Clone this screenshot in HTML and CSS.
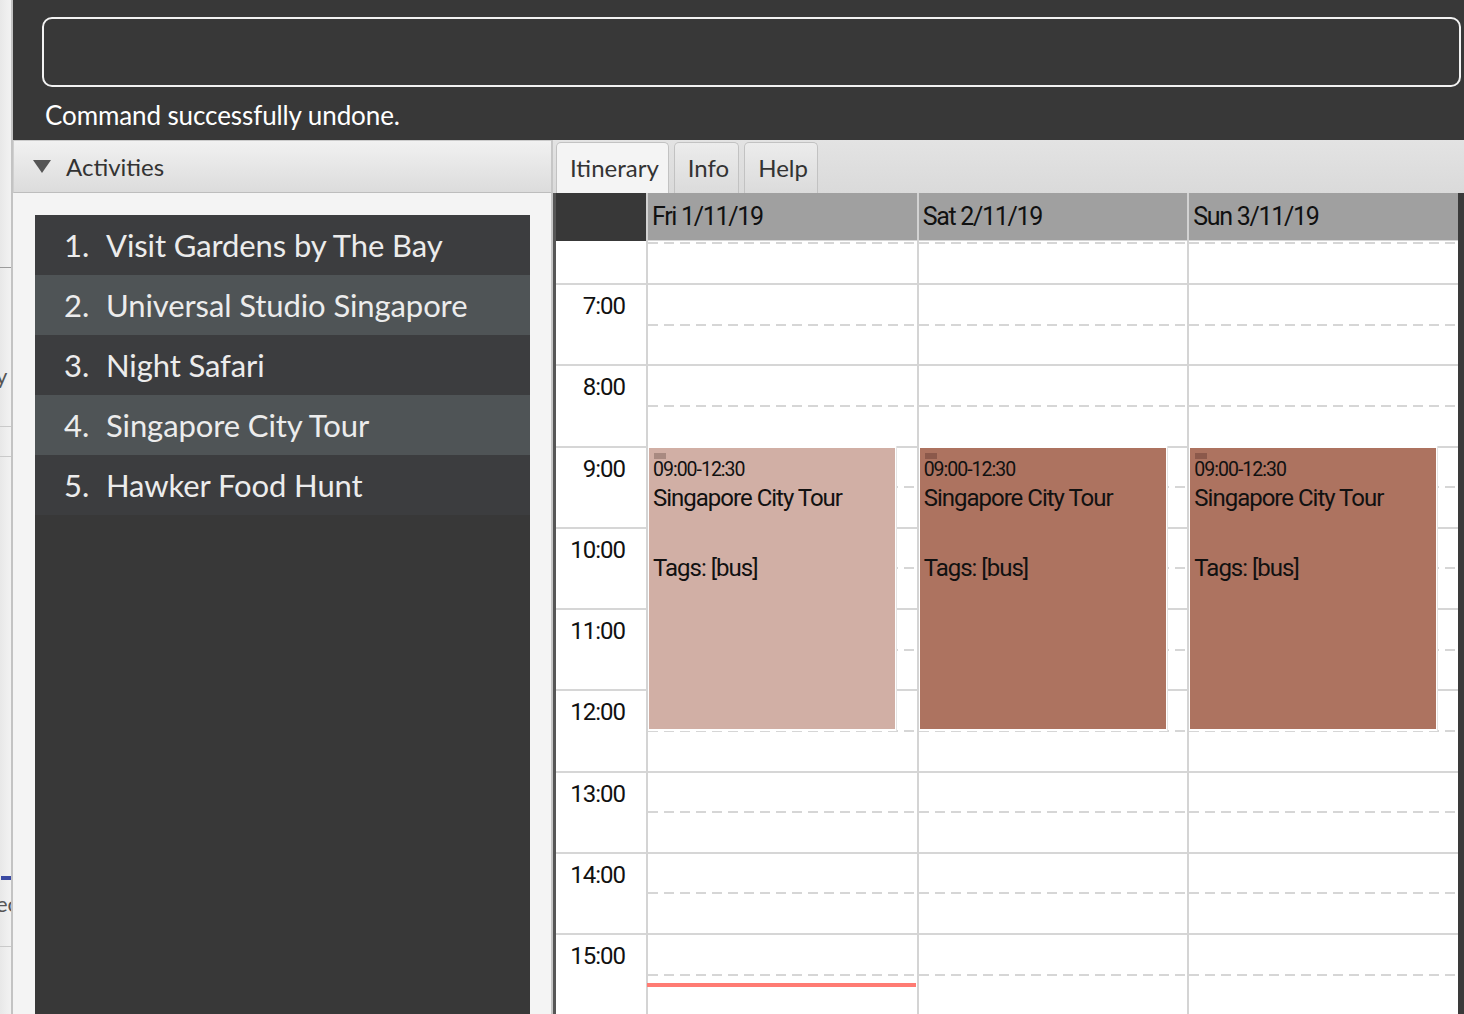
FILE: index.html
```html
<!DOCTYPE html>
<html>
<head>
<meta charset="utf-8">
<link rel="stylesheet" href="styles.css">
</head>
<body>
<div class="screen">
  <div class="bgwin">
    <div class="bw-gap g1"></div>
    <div class="bw-line dark"></div>
    <div class="bw-gap g2"></div>
    <div class="bw-text">y</div>
    <div class="bw-gap g3"></div>
    <div class="bw-line"></div>
    <div class="bw-gap g4"></div>
    <div class="bw-line"></div>
    <div class="bw-gap g5"></div>
    <div class="bw-blue"></div>
    <div class="bw-gap g6"></div>
    <div class="bw-text">ec</div>
    <div class="bw-gap g7"></div>
    <div class="bw-line"></div>
  </div>
  <div class="app">
    <div class="cmdbar">
      <div class="cmdbox"></div>
      <div class="result">Command successfully undone.</div>
    </div>
    <div class="main">
      <div class="left">
        <div class="pane-title"><span class="tri"></span><span>Activities</span></div>
        <div class="listwrap">
          <ul class="list">
            <li class="a"><span class="num">1.</span>Visit Gardens by The Bay</li>
            <li class="b"><span class="num">2.</span>Universal Studio Singapore</li>
            <li class="a"><span class="num">3.</span>Night Safari</li>
            <li class="b"><span class="num">4.</span>Singapore City Tour</li>
            <li class="a"><span class="num">5.</span>Hawker Food Hunt</li>
          </ul>
        </div>
      </div>
      <div class="divider"></div>
      <div class="right">
        <div class="tabs">
          <div class="tab sel">Itinerary</div>
          <div class="tab">Info</div>
          <div class="tab">Help</div>
        </div>
        <div class="cal">
          <div class="cal-head">
            <div class="corner"></div>
            <div class="dayh">Fri 1/11/19</div>
            <div class="dayh">Sat 2/11/19</div>
            <div class="dayh">Sun 3/11/19</div>
            <div class="edge"></div>
          </div>
          <div class="cal-body">
            <div class="timecol">
              <div class="trow first"></div>
              <div class="trow">7:00</div>
              <div class="trow">8:00</div>
              <div class="trow">9:00</div>
              <div class="trow">10:00</div>
              <div class="trow">11:00</div>
              <div class="trow">12:00</div>
              <div class="trow">13:00</div>
              <div class="trow">14:00</div>
              <div class="trow">15:00</div>
            </div>
            <div class="daycol">
              <div class="slot first"></div>
              <div class="slot"></div><div class="slot half"></div>
              <div class="slot"></div><div class="slot half"></div>
              <div class="slot"></div><div class="slot half"></div>
              <div class="slot"></div><div class="slot half"></div>
              <div class="slot"></div><div class="slot half"></div>
              <div class="slot"></div><div class="slot half"></div>
              <div class="slot"></div><div class="slot half"></div>
              <div class="slot"></div><div class="slot half"></div>
              <div class="slot"></div><div class="slot half"></div>
              <div class="ev">
                <div class="evbox light">
                  <div class="mark"></div>
                  <div class="time">09:00-12:30</div>
                  <div class="title">Singapore City Tour</div>
                  <div class="tags">Tags: [bus]</div>
                </div>
              </div>
              <div class="now"></div>
            </div>
            <div class="daycol">
              <div class="slot first"></div>
              <div class="slot"></div><div class="slot half"></div>
              <div class="slot"></div><div class="slot half"></div>
              <div class="slot"></div><div class="slot half"></div>
              <div class="slot"></div><div class="slot half"></div>
              <div class="slot"></div><div class="slot half"></div>
              <div class="slot"></div><div class="slot half"></div>
              <div class="slot"></div><div class="slot half"></div>
              <div class="slot"></div><div class="slot half"></div>
              <div class="slot"></div><div class="slot half"></div>
              <div class="ev">
                <div class="evbox">
                  <div class="mark"></div>
                  <div class="time">09:00-12:30</div>
                  <div class="title">Singapore City Tour</div>
                  <div class="tags">Tags: [bus]</div>
                </div>
              </div>
            </div>
            <div class="daycol">
              <div class="slot first"></div>
              <div class="slot"></div><div class="slot half"></div>
              <div class="slot"></div><div class="slot half"></div>
              <div class="slot"></div><div class="slot half"></div>
              <div class="slot"></div><div class="slot half"></div>
              <div class="slot"></div><div class="slot half"></div>
              <div class="slot"></div><div class="slot half"></div>
              <div class="slot"></div><div class="slot half"></div>
              <div class="slot"></div><div class="slot half"></div>
              <div class="slot"></div><div class="slot half"></div>
              <div class="ev">
                <div class="evbox">
                  <div class="mark"></div>
                  <div class="time">09:00-12:30</div>
                  <div class="title">Singapore City Tour</div>
                  <div class="tags">Tags: [bus]</div>
                </div>
              </div>
            </div>
            <div class="edge"></div>
          </div>
        </div>
      </div>
    </div>
  </div>
</div>
</body>
</html>
```
FILE: styles.css
```css
* { box-sizing: border-box; margin: 0; padding: 0; }
html, body { width: 1464px; height: 1014px; overflow: hidden; }
body { background: #ececec; font-family: Lato, "Open Sans", sans-serif; }

.screen { display: flex; height: 1014px; }

/* fragment of a window behind */
.bgwin {
  width: 13px; flex: none; overflow: hidden;
  background: linear-gradient(to right, #e8e8e8, #f0f0f0 8px, #f2f2f2 11px);
  border-right: 2px solid #c3c3c3;
  display: flex; flex-direction: column;
}
.bw-gap { flex: none; }
.g1 { height: 267px; }
.g2 { height: 96px; }
.g3 { height: 38px; }
.g4 { height: 29px; }
.g5 { height: 419px; }
.g6 { height: 12px; }
.g7 { height: 30px; }
.bw-line { height: 1px; background: #cacaca; flex: none; }
.bw-line.dark { background: #9c9c9c; }
.bw-text { height: 24px; line-height: 24px; font-size: 22px; color: #555; margin-left: -4px; white-space: nowrap; flex: none; }
.bw-blue { height: 4px; margin-left: 1px; background: #3b4aa2; flex: none; }

.app { flex: 1; display: flex; flex-direction: column; min-width: 0; }

.cmdbar { height: 140px; flex: none; background: #383838; padding: 17px 3px 0 29px; }
.cmdbox { height: 70px; border: 2px solid #f2f2f2; border-radius: 10px; }
.result { margin-top: 12px; padding-left: 3px; color: #ffffff; font-size: 26px; line-height: 32px; white-space: nowrap; letter-spacing: -0.1px; }

.main { flex: 1; display: flex; min-height: 0; }

.left { width: 538px; flex: none; background: #f4f4f4; display: flex; flex-direction: column; }
.pane-title {
  height: 53px; flex: none; display: flex; align-items: center; padding-left: 19px;
  border-top: 1px solid #cbcbcb; border-bottom: 1px solid #bdbdbd; border-left: 1px solid #d0d0d0;
  background: linear-gradient(#f1f1f1, #dcdcdc);
  font-size: 24px; color: #333;
}
.tri { width: 0; height: 0; border-left: 9px solid transparent; border-right: 9px solid transparent; border-top: 13px solid #555; margin-right: 15px; }

.listwrap { flex: 1; padding: 22px 21px 0 22px; display: flex; flex-direction: column; min-height: 0; }
.list { list-style: none; flex: 1; background: #383838; }
.list li { height: 60px; line-height: 60px; padding-left: 29px; font-size: 31px; letter-spacing: -0.1px; color: #ececec; white-space: nowrap; }
.list .num { display: inline-block; width: 42px; }
.list li.a { background: #3c3d3f; }
.list li.b { background: #4f5456; }

.divider { width: 2px; flex: none; background: #c6c6c6; }

.right { flex: 1; display: flex; flex-direction: column; min-width: 0; }
.tabs { height: 53px; flex: none; display: flex; align-items: flex-end; gap: 5px; padding-left: 3px; background: linear-gradient(#e3e3e3, #dadada); }
.tab {
  height: 51px; display: flex; align-items: center; padding: 0 9px 2px 13px;
  font-size: 24px; color: #333;
  border: 1px solid #c2c2c2; border-bottom: none; border-radius: 5px 5px 0 0;
  background: linear-gradient(#ececec, #dbdbdb);
}
.tab.sel { background: #f4f4f4; }

.cal { flex: 1; display: flex; flex-direction: column; min-height: 0; border-left: 3px solid #565656; background: #fff; font-family: Roboto, "Liberation Sans", sans-serif; color: #111; }
.cal-head, .cal-body { display: grid; grid-template-columns: 90px 1fr 1fr 1fr 6px; }
.cal-head { height: 48px; flex: none; }
.corner { background: #383838; }
.dayh { background: #a0a0a0; border-left: 2px solid #d2d2d2; border-bottom: 1px solid #d6d6d6; display: flex; align-items: center; padding-left: 4px; font-size: 25px; letter-spacing: -1.3px; }
.edge { background: #3a3a3a; }

.cal-body { flex: 1; min-height: 0; overflow: hidden; }
.timecol { background: #fff; }
.trow { height: 81.25px; border-top: 2px solid #d6d6d6; text-align: right; padding: 7px 21px 0 0; font-size: 24px; line-height: 28px; letter-spacing: -1px; }
.trow.first { height: 42px; border-top: none; }

.daycol { position: relative; border-left: 2px solid #d4d4d4; }
.slot { height: 40.625px; border-top: 2px solid #d6d6d6; }
.slot.half { border-top: none; background: repeating-linear-gradient(to right, #d6d6d6 0 10px, transparent 10px 16px) 0 0 / 100% 2px no-repeat; }
.slot.first { height: 42px; border-top: none; background: repeating-linear-gradient(to right, #d6d6d6 0 10px, transparent 10px 16px) 0 1px / 100% 2px no-repeat; }

.ev { position: absolute; left: 0; top: 205px; width: 249px; height: 285px; background: #fff; padding: 2px 1px 2px 1px; border-right: 1px solid #e4e4e4; }
.evbox { height: 100%; background: #ad7360; padding: 5px 4px 0 4px; }
.evbox.light { background: #d1afa5; }
.mark { width: 12px; height: 6px; margin-left: 1px; background: #8c594b; }
.evbox.light .mark { background: #a88a81; }
.time { font-size: 19.5px; line-height: 20px; letter-spacing: -1px; margin-top: 1px; white-space: nowrap; }
.title { font-size: 24px; line-height: 30px; letter-spacing: -1px; margin-top: 3px; white-space: nowrap; }
.tags { font-size: 24px; line-height: 30px; letter-spacing: -1px; margin-top: 40px; white-space: nowrap; }

.now { position: absolute; left: -1px; right: 1px; top: 742px; height: 4px; background: #ff7b73; }
```
